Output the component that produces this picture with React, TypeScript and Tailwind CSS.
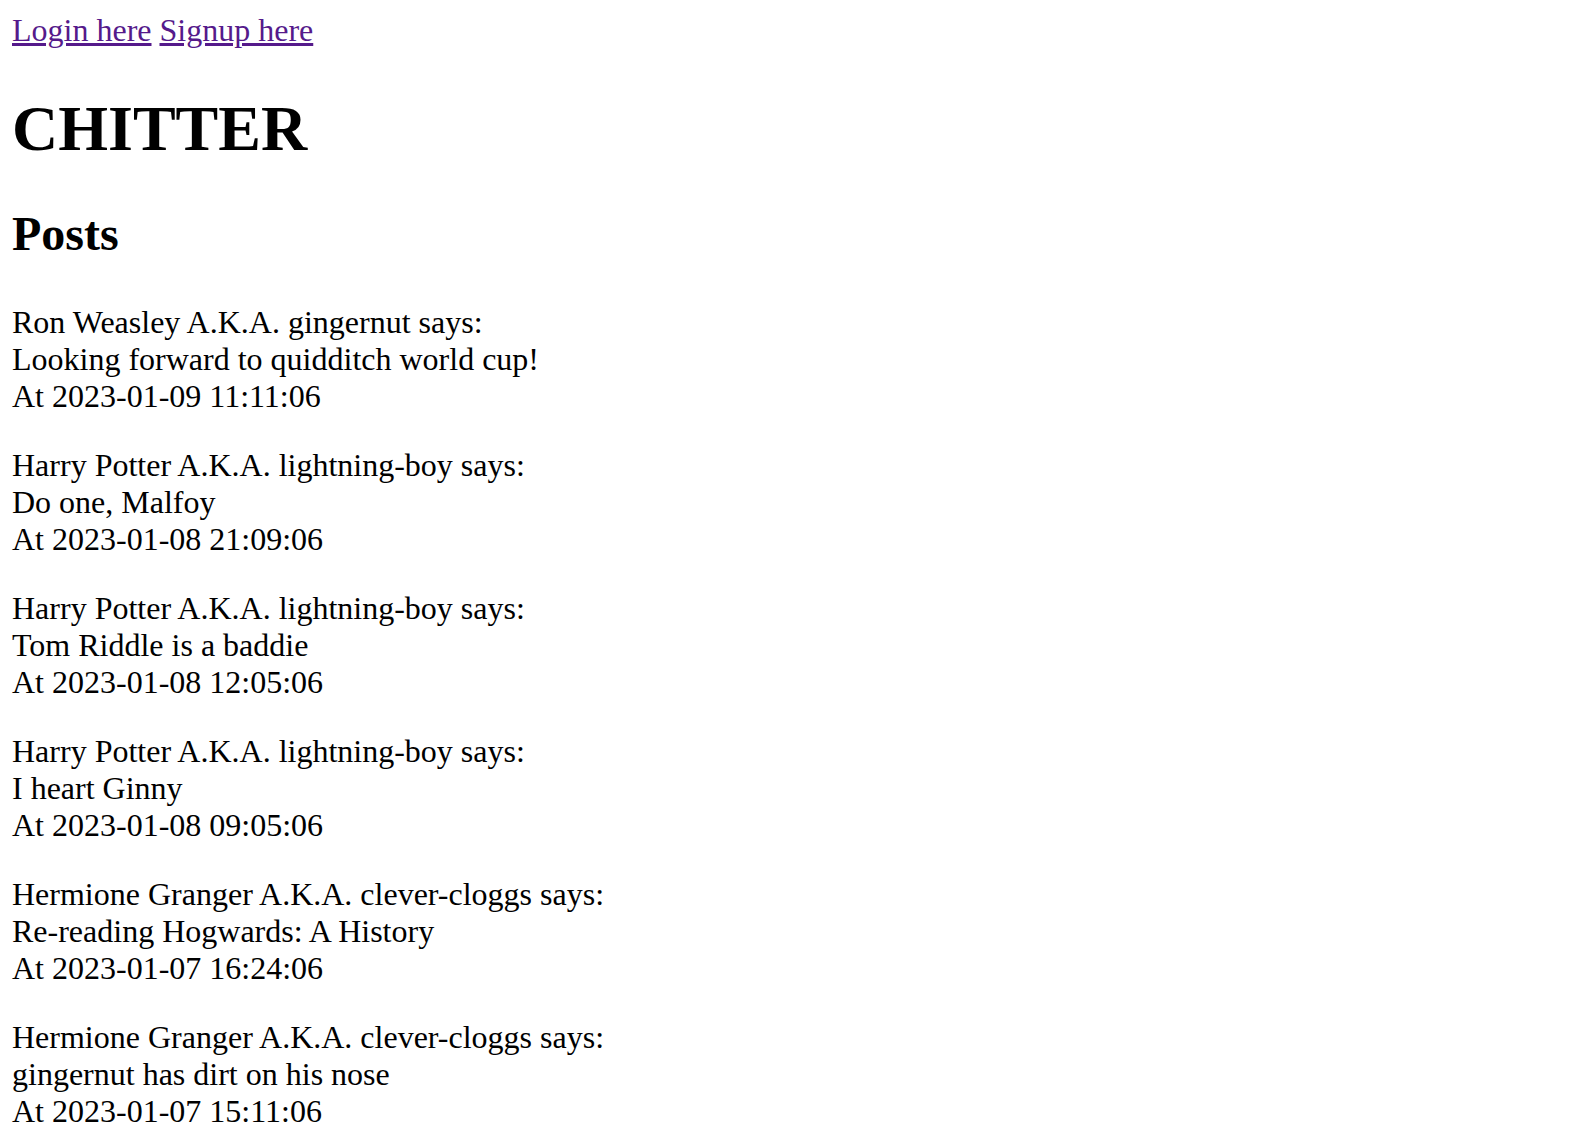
const posts = [
  { name: "Ron Weasley", handle: "gingernut", body: "Looking forward to quidditch world cup!", at: "2023-01-09 11:11:06" },
  { name: "Harry Potter", handle: "lightning-boy", body: "Do one, Malfoy", at: "2023-01-08 21:09:06" },
  { name: "Harry Potter", handle: "lightning-boy", body: "Tom Riddle is a baddie", at: "2023-01-08 12:05:06" },
  { name: "Harry Potter", handle: "lightning-boy", body: "I heart Ginny", at: "2023-01-08 09:05:06" },
  { name: "Hermione Granger", handle: "clever-cloggs", body: "Re-reading Hogwards: A History", at: "2023-01-07 16:24:06" },
  { name: "Hermione Granger", handle: "clever-cloggs", body: "gingernut has dirt on his nose", at: "2023-01-07 15:11:06" },
];

export default function App() {
  return (
    <div className="min-h-screen bg-white p-[12px] text-[32px] leading-[37px] text-black font-['Liberation_Serif','Times_New_Roman',serif]">
      {/* nav links */}
      <div>
        <a href="#" className="text-[#551a8b] underline">Login here</a>{" "}
        <a href="#" className="text-[#551a8b] underline">Signup here</a>
      </div>

      <h1 className="mt-[43px] text-[64px] leading-[74px] font-bold">CHITTER</h1>

      <h2 className="mt-[40px] text-[48px] leading-[55px] font-bold">Posts</h2>

      <div className="mt-[43px] flex flex-col gap-[32px]">
        {posts.map((p, i) => (
          <p key={i}>
            {p.name} A.K.A. {p.handle} says:
            <br />
            {p.body}
            <br />
            At {p.at}
          </p>
        ))}
      </div>
    </div>
  );
}
